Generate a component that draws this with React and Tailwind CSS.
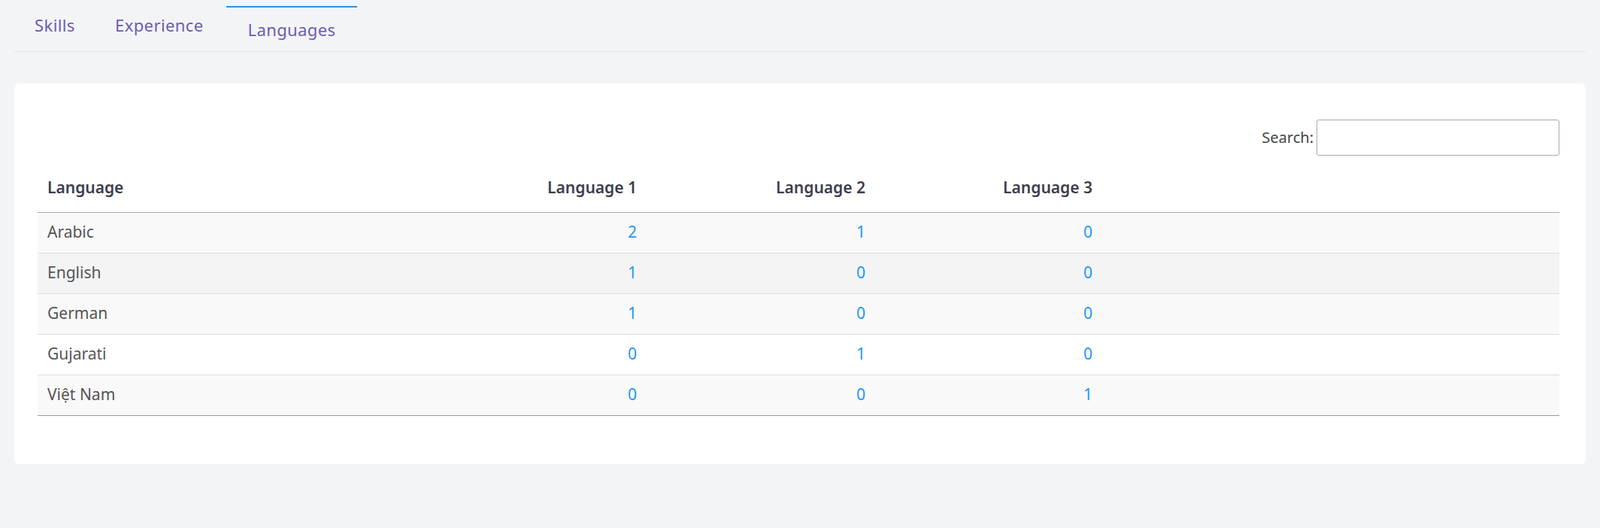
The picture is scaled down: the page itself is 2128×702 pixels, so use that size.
import React from 'react';

const rows = [
  ['Arabic', 2, 1, 0, 'bg-[#f9f9f9]'],
  ['English', 1, 0, 0, 'bg-[#f4f4f4]'],
  ['German', 1, 0, 0, 'bg-[#f9f9f9]'],
  ['Gujarati', 0, 1, 0, 'bg-white'],
  ['Việt Nam', 0, 0, 1, 'bg-[#f9f9f9]'],
];

export default function App() {
  return (
    <div className="min-h-[702px] bg-[#f3f4f6] px-[19px] font-['Open_Sans',sans-serif] text-[#555]">
      <div className="flex h-[69px] items-stretch border-b border-[#e3e4e8] text-[22px] tracking-[0.4px] text-[#6a5cb4]">
        <div className="flex w-[107px] items-center pb-[2px] pl-[27px]">Skills</div>
        <div className="flex w-[175px] items-center pb-[2px] pl-[27px]">Experience</div>
        <div className="mt-[8px] flex w-[174px] items-center justify-center border-t-2 border-[#2f8fe0]">Languages</div>
      </div>

      <div className="mt-[42px] h-[506px] rounded-md bg-white pl-[31px] pr-[35px] pt-[48px]">
        <div className="flex items-center justify-end gap-[4px] text-[20px] text-[#444]">
          <span>Search:</span>
          <input className="h-[48px] w-[323px] rounded-[3px] border border-[#aaa] bg-white" />
        </div>

        <table className="mt-[10px] w-full table-fixed border-collapse text-[21px]">
          <colgroup>
            <col className="w-[500px]" />
            <col className="w-[310px]" />
            <col className="w-[304px]" />
            <col className="w-[302px]" />
            <col />
          </colgroup>
          <thead>
            <tr className="h-[65px] border-b border-[#aaa] font-semibold text-[#3e3e4e]">
              <th className="px-[13px] text-left font-semibold">Language</th>
              <th className="px-[13px] text-right font-semibold">Language 1</th>
              <th className="px-[13px] text-right font-semibold">Language 2</th>
              <th className="px-[13px] text-right font-semibold">Language 3</th>
              <th />
            </tr>
          </thead>
          <tbody>
            {rows.map(([name, a, b, c, bg], i) => (
              <tr key={name} className={`h-[54px] ${bg} ${i === rows.length - 1 ? 'border-b border-[#999]' : 'border-b border-[#ddd]'}`}>
                <td className="px-[13px]">{name}</td>
                <td className="px-[13px] text-right text-[#2196f3]">{a}</td>
                <td className="px-[13px] text-right text-[#2196f3]">{b}</td>
                <td className="px-[13px] text-right text-[#2196f3]">{c}</td>
                <td />
              </tr>
            ))}
          </tbody>
        </table>
      </div>
    </div>
  );
}
